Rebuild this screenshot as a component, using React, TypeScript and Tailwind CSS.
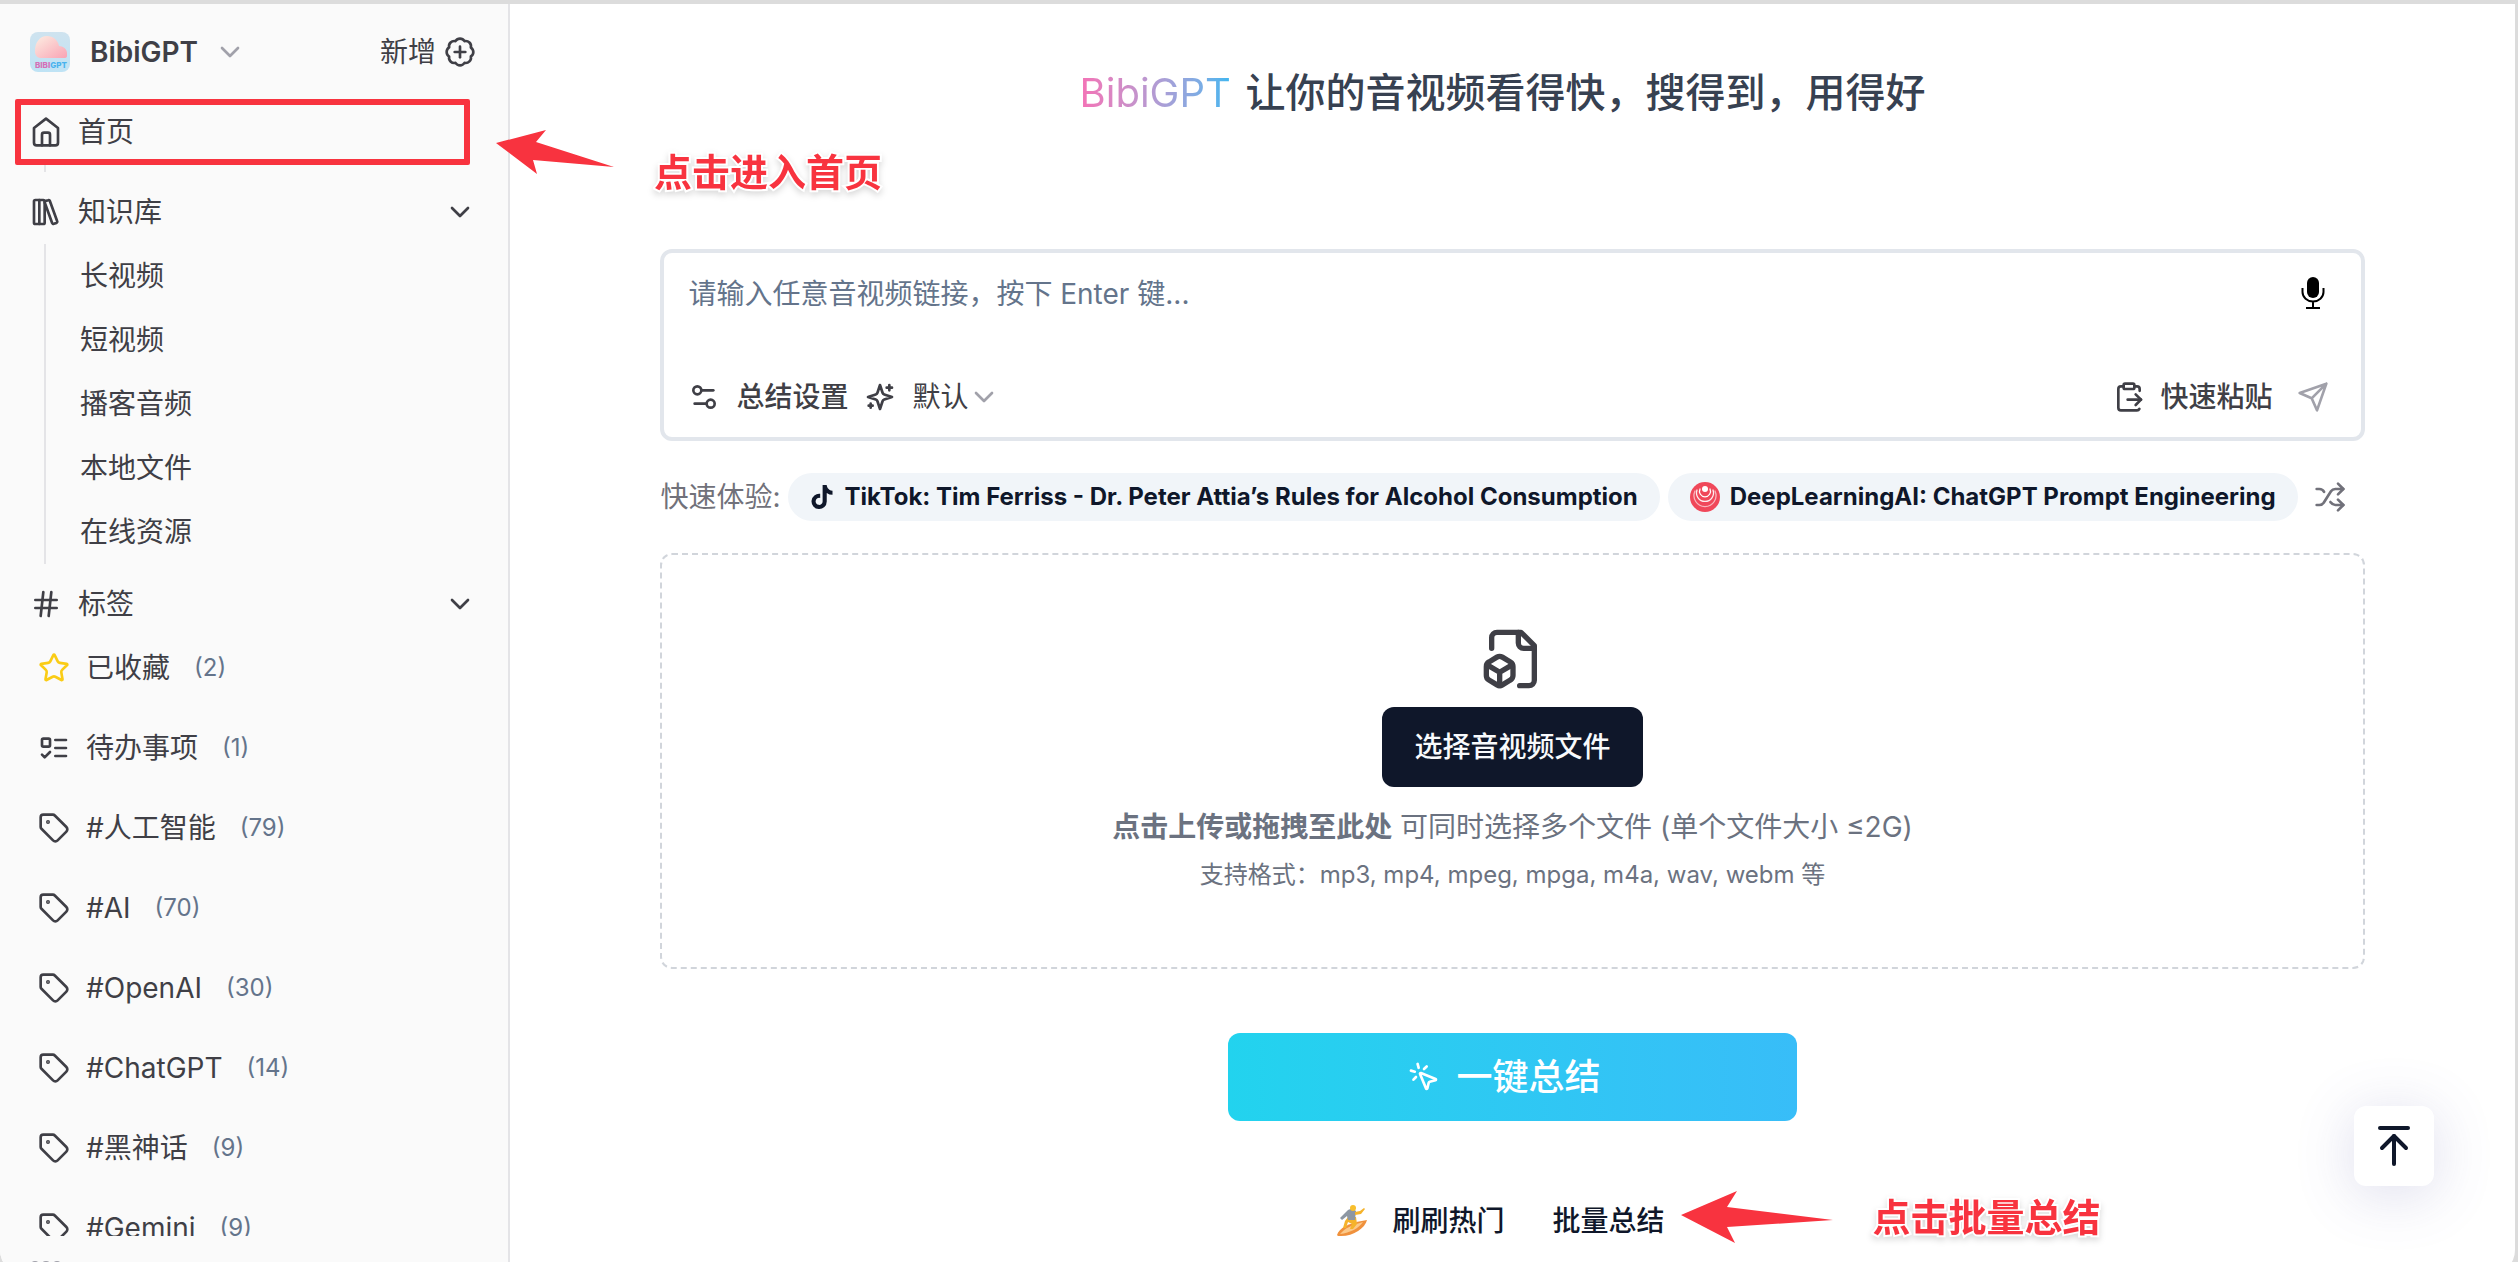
import type { ReactNode } from "react";
import {
  ArrowUpToLine,
  BadgePlus,
  ChevronDown,
  ClipboardPaste,
  Hash,
  LibraryBig,
  MousePointerClick,
  Settings2,
  Shuffle,
  Star,
  Tag,
} from "lucide-react";
import { FaTiktok } from "react-icons/fa6";

const libraryItems = ["长视频", "短视频", "播客音频", "本地文件", "在线资源"];

const tags = [
  { name: "#人工智能", count: 79 },
  { name: "#AI", count: 70 },
  { name: "#OpenAI", count: 30 },
  { name: "#ChatGPT", count: 14 },
  { name: "#黑神话", count: 9 },
  { name: "#Gemini", count: 9 },
];

function AppLogo() {
  return (
    <svg viewBox="0 0 40 40" className="size-10">
      <defs>
        <linearGradient id="logo-bg" x1="0" y1="0" x2="0" y2="1">
          <stop offset="0" stopColor="#cfe3ef" />
          <stop offset="1" stopColor="#bfe3f5" />
        </linearGradient>
        <linearGradient id="logo-cloud" x1="0" y1="0" x2="1" y2="1">
          <stop offset="0" stopColor="#fdeee2" />
          <stop offset="1" stopColor="#f9a3b4" />
        </linearGradient>
      </defs>
      <rect width="40" height="40" rx="8" fill="url(#logo-bg)" />
      <path
        d="M10 26a6 6 0 0 1-5-7C5 10 10 4 17 4c6 0 11 4 12 10 4 0 8 3 8 7v3c0 1-1 2-2 2Z"
        fill="url(#logo-cloud)"
      />
      <text x="5" y="36" fontSize="8" fontWeight="800" fill="#d56fb6" fontFamily="Inter, sans-serif">
        BIBI
        <tspan fill="#49b3ee">GPT</tspan>
      </text>
    </svg>
  );
}

function HomeIcon() {
  return (
    <svg viewBox="0 0 24 24" fill="none" stroke="currentColor" strokeWidth="2" strokeLinecap="round" strokeLinejoin="round" className="size-8">
      <path d="m3 9 9-7 9 7v11a2 2 0 0 1-2 2H5a2 2 0 0 1-2-2z" />
      <path d="M9 22V14a1.500 1.500 0 0 1 1.500-1.500h3A1.500 1.500 0 0 1 15 14v8" />
    </svg>
  );
}

function TodoIcon() {
  return (
    <svg viewBox="0 0 24 24" fill="none" stroke="currentColor" strokeWidth="2" strokeLinecap="round" strokeLinejoin="round" className="size-8">
      <rect x="3" y="5" width="6" height="6" rx="1" />
      <path d="m3 17 2 2 4-4M13 6h8M13 12h8M13 18h8" />
    </svg>
  );
}

function SparklesIcon() {
  return (
    <svg viewBox="0 0 24 24" fill="none" stroke="currentColor" strokeWidth="2" strokeLinecap="round" strokeLinejoin="round" className="size-8">
      <path d="m12 3-1.912 5.813a2 2 0 0 1-1.275 1.275L3 12l5.813 1.912a2 2 0 0 1 1.275 1.275L12 21l1.912-5.813a2 2 0 0 1 1.275-1.275L21 12l-5.813-1.912a2 2 0 0 1-1.275-1.275L12 3Z" />
      <path d="M5 17v3M3.500 18.500h3M19 3v4M17 5h4" />
    </svg>
  );
}

function SendIcon() {
  return (
    <svg viewBox="0 0 24 24" fill="none" stroke="currentColor" strokeWidth="2" strokeLinecap="round" strokeLinejoin="round" className="size-8">
      <path d="m22 2-7 20-4-9-9-4ZM22 2 11 13" />
    </svg>
  );
}

function MicIcon() {
  return (
    <svg viewBox="0 0 24 32" className="h-8 w-6">
      <rect x="6" y="0" width="12" height="21" rx="6" fill="#000" />
      <path
        d="M1.500 11v4a10.500 9.500 0 0 0 21 0v-4M12 24.500V30M5 31h14"
        fill="none"
        stroke="#000"
        strokeWidth="2"
      />
    </svg>
  );
}

function FileBoxIcon() {
  return (
    <svg viewBox="0 0 24 24" fill="none" stroke="currentColor" strokeWidth="2" strokeLinecap="round" strokeLinejoin="round" className="size-16">
      <path d="M14.500 22H18a2 2 0 0 0 2-2V7l-5-5H6a2 2 0 0 0-2 2v4" />
      <path d="M14 2v4a2 2 0 0 0 2 2h4" />
      <path d="M3 13.100a2 2 0 0 0-1 1.760v3.240a2 2 0 0 0 .97 1.780L6 21.700a2 2 0 0 0 2.030.010L11 19.900a2 2 0 0 0 1-1.760V14.900a2 2 0 0 0-.970-1.780L8 11.300a2 2 0 0 0-2.030-.010Z" />
      <path d="M7 17v5M11.700 14.200 7 17l-4.700-2.800" />
    </svg>
  );
}

function DeepLearningLogo() {
  return (
    <svg viewBox="0 0 30 30" className="size-[30px]">
      <circle cx="15" cy="15" r="15" fill="#f0485a" />
      <g fill="none" stroke="#fff" strokeWidth="1.300" strokeLinecap="round">
        <path d="M5 9a11 11 0 1 0 20 0" opacity="0.600" />
        <path d="M7 8a8.500 8.500 0 1 0 16 0" opacity="0.900" />
        <path d="M10 7a5.500 5.500 0 1 0 10 0" />
      </g>
      <circle cx="15" cy="7" r="3" fill="#fff" />
    </svg>
  );
}

function SurferIcon() {
  return (
    <svg viewBox="0 0 32 32" className="size-8">
      <path d="M1 30C3 23 12 18 31 15c-2 8-13 16-26 16-2 0-4 0-4-1Z" fill="#f0913c" />
      <path d="M4 29c5-6 12-9 23-12-4 6-13 11-23 12Z" fill="#fbc98a" />
      <path d="M12 12h8l1 7-4 5h-3l2-5-4-2-2 6H7l2-7Z" fill="#f5b32b" />
      <path d="M12 5c3-2 6-1 8 1l-1 9h-7l-1-4-5 4-2-2Z" fill="#8d97a3" />
      <path d="m19 7 5-1 4-3 1 1-4 5-6 1Z" fill="#f5b32b" />
      <circle cx="17" cy="3" r="3" fill="#f8bf2d" />
    </svg>
  );
}

function GroupIcon() {
  return (
    <svg viewBox="0 0 32 32" fill="none" stroke="currentColor" strokeWidth="2" strokeLinecap="round" className="size-8">
      <circle cx="16" cy="7" r="5" />
      <circle cx="5" cy="5" r="3" />
      <circle cx="27" cy="5" r="3" />
      <path d="M7 28v-5a9 9 0 0 1 18 0v5" />
    </svg>
  );
}

function NavRow({ icon, label, open }: { icon: ReactNode; label: string; open?: boolean }) {
  return (
    <button className="flex h-16 w-full items-center gap-4 text-left">
      {icon}
      <span className="flex-1">{label}</span>
      {open && <ChevronDown className="size-8" />}
    </button>
  );
}

function TagRow({ icon, name, count }: { icon: ReactNode; name: string; count: number }) {
  return (
    <a href="#" className="flex h-16 shrink-0 items-center gap-4 pl-2">
      {icon}
      <span>{name}</span>
      <span className="pl-2 text-[24px] text-[#64748b]">({count})</span>
    </a>
  );
}

function QuickPill({ icon, children }: { icon: ReactNode; children: ReactNode }) {
  return (
    <button className="flex h-12 items-center gap-2.5 rounded-full bg-[#f1f5f9] px-[22px] text-[24px] font-bold whitespace-nowrap text-[#0f172a]">
      {icon}
      {children}
    </button>
  );
}

function Callout({ children }: { children: ReactNode }) {
  return (
    <span className="text-[38px] leading-[48px] font-bold whitespace-nowrap text-[#f8333f] [paint-order:stroke_fill] [-webkit-text-stroke:4px_white] [filter:drop-shadow(0_3px_3px_rgb(0_0_0/0.15))]">
      {children}
    </span>
  );
}

function Sidebar() {
  return (
    <aside className="flex w-[510px] shrink-0 flex-col overflow-hidden border-r-2 border-[#e4e4e7] bg-[#fafafa] pt-4 pr-8 pl-[30px]">
      <div className="flex h-16 shrink-0 items-center justify-between">
        <button className="flex items-center gap-5 font-semibold">
          <AppLogo />
          BibiGPT
          <ChevronDown className="-ml-1 size-8 text-[#a1a1aa]" />
        </button>
        <button className="flex items-center gap-2">
          新增
          <BadgePlus className="size-8" />
        </button>
      </div>

      <nav className="-ml-[15px] flex min-h-0 flex-1 flex-col overflow-hidden pt-4 pl-[15px]">
        <div className="relative">
          <NavRow icon={<HomeIcon />} label="首页" />
          <span className="absolute -inset-y-px right-[6px] -left-[15px] rounded-xs border-[6px] border-[#f8333f]" />
        </div>
        <div className="ml-[14px] h-2 shrink-0 border-l-2 border-[#e4e4e7]" />

        <div className="mt-2">
          <NavRow icon={<LibraryBig className="size-8" />} label="知识库" open />
          <ul className="ml-[14px] border-l-2 border-[#e4e4e7] pl-[34px]">
            {libraryItems.map((item) => (
              <li key={item}>
                <a href="#" className="flex h-16 items-center">
                  {item}
                </a>
              </li>
            ))}
          </ul>
        </div>

        <div className="mt-2">
          <NavRow icon={<Hash className="size-8" />} label="标签" open />
        </div>
        <div className="flex min-h-0 flex-1 flex-col gap-4 overflow-hidden">
          <TagRow icon={<Star className="size-8 text-[#facc15]" />} name="已收藏" count={2} />
          <TagRow icon={<TodoIcon />} name="待办事项" count={1} />
          {tags.map((tag) => (
            <TagRow key={tag.name} icon={<Tag className="size-8" />} name={tag.name} count={tag.count} />
          ))}
        </div>
      </nav>
      <div className="h-[38px] shrink-0 overflow-hidden pt-6 text-[#a1a1aa]">
        <GroupIcon />
      </div>
    </aside>
  );
}

function PromptBox() {
  return (
    <form className="rounded-xl border-4 border-[#e2e6ec] pr-8 pb-2 pl-6">
      <div className="flex h-28 items-start justify-between pt-5">
        <textarea
          aria-label="音视频链接"
          rows={2}
          placeholder="请输入任意音视频链接，按下 Enter 键..."
          className="flex-1 resize-none overflow-hidden leading-[42px] outline-none placeholder:text-[#64748b]"
        />
        <button type="button" aria-label="语音输入" className="mr-1 pt-1">
          <MicIcon />
        </button>
      </div>
      <div className="flex h-16 items-center justify-between">
        <div className="flex items-center gap-4">
          <button type="button" className="flex items-center gap-4 font-medium">
            <Settings2 className="size-8" />
            总结设置
          </button>
          <button type="button" className="flex items-center gap-4">
            <SparklesIcon />
            默认
            <ChevronDown className="-ml-4 size-8 text-[#a1a1aa]" />
          </button>
        </div>
        <div className="flex items-center gap-6">
          <button type="button" className="flex items-center gap-4 font-medium">
            <ClipboardPaste className="size-8" />
            快速粘贴
          </button>
          <button type="submit" aria-label="发送" className="text-[#a1a1aa]">
            <SendIcon />
          </button>
        </div>
      </div>
    </form>
  );
}

function QuickLinks() {
  return (
    <div className="mt-8 flex items-center gap-2 text-[#71717a]">
      <span className="whitespace-nowrap">快速体验:</span>
      <QuickPill icon={<FaTiktok className="size-6" />}>
        TikTok: Tim Ferriss - Dr. Peter Attia’s Rules for Alcohol Consumption
      </QuickPill>
      <QuickPill icon={<DeepLearningLogo />}>DeepLearningAI: ChatGPT Prompt Engineering</QuickPill>
      <button aria-label="换一批" className="ml-2">
        <Shuffle className="size-8" />
      </button>
    </div>
  );
}

function UploadArea() {
  return (
    <div className="mt-8 flex flex-col items-center rounded-xl border-2 border-dashed border-[#d1d5db] py-[72px] text-[#6b7280]">
      <div className="text-[#3f3f46]">
        <FileBoxIcon />
      </div>
      <button className="mt-4 h-20 rounded-xl bg-[#0f172a] px-8 font-medium text-[#f8fafc]">
        选择音视频文件
      </button>
      <p className="mt-5 leading-10">
        <span className="font-semibold">点击上传或拖拽至此处</span> 可同时选择多个文件 (单个文件大小 ≤2G)
      </p>
      <p className="mt-2 text-[24px] leading-10">
        支持格式：mp3, mp4, mpeg, mpga, m4a, wav, webm 等
      </p>
    </div>
  );
}

export default function App() {
  return (
    <div className="h-screen overflow-hidden bg-[#dcdcdc] pt-0.5 pr-[3px] font-['Inter','Noto_Sans_CJK_SC',sans-serif] text-[28px] leading-10 text-[#3f3f46]">
      <div className="relative flex h-[calc(100%+12px)] overflow-hidden rounded-b-3xl border-t-2 border-[#dcdcdc] bg-white">
        <Sidebar />

        <main className="flex min-w-0 flex-1 flex-col items-center pt-16">
          <h1 className="pr-5 text-[40px] leading-[50px] font-medium whitespace-nowrap text-[#374151]">
            <span className="mr-1 bg-linear-to-r from-[#f472b6] to-[#38b6f0] bg-clip-text font-normal text-transparent">BibiGPT</span>{" "}
            让你的音视频看得快，搜得到，用得好
          </h1>

          <div className="mt-[131px] w-[85%]">
            <PromptBox />
            <QuickLinks />
            <UploadArea />
          </div>

          <button className="mt-16 flex h-[88px] w-[28.333%] items-center justify-center gap-4 rounded-xl bg-linear-to-r from-[#22d3ee] to-[#38bdf8] pr-4 text-[36px] font-medium text-white">
            <MousePointerClick className="size-8" />
            一键总结
          </button>

          <div className="mt-[68px] flex h-16 items-center gap-12 pr-6 font-medium text-[#0f172a]">
            <button className="flex items-center gap-6">
              <SurferIcon />
              刷刷热门
            </button>
            <div className="relative">
              <button>批量总结</button>
              <div className="absolute -top-2.5 left-full ml-4 flex items-center gap-10">
                <svg viewBox="0 0 152 52" className="h-[52px] w-[152px]" fill="#f8333f">
                  <path d="M0 24 56 0 46 16 152 29 46 36 54 52Z" />
                </svg>
                <Callout>点击批量总结</Callout>
              </div>
            </div>
          </div>
        </main>

        {/* Pointer to the home entry */}
        <div className="absolute top-[126px] left-[496px] flex items-start gap-10">
          <svg viewBox="0 0 118 44" className="h-11 w-[118px]" fill="#f8333f">
            <path d="M0 13 50 0 40 12 118 37 37 30 41 44Z" />
          </svg>
          <div className="pt-[18px]">
            <Callout>点击进入首页</Callout>
          </div>
        </div>

        <button
          aria-label="回到顶部"
          className="absolute right-[81px] bottom-[88px] flex size-20 items-center justify-center rounded-xl bg-white text-[#0f172a] shadow-[0_8px_60px_rgb(80_80_160/0.2)]"
        >
          <ArrowUpToLine className="size-12" />
        </button>
      </div>
    </div>
  );
}
